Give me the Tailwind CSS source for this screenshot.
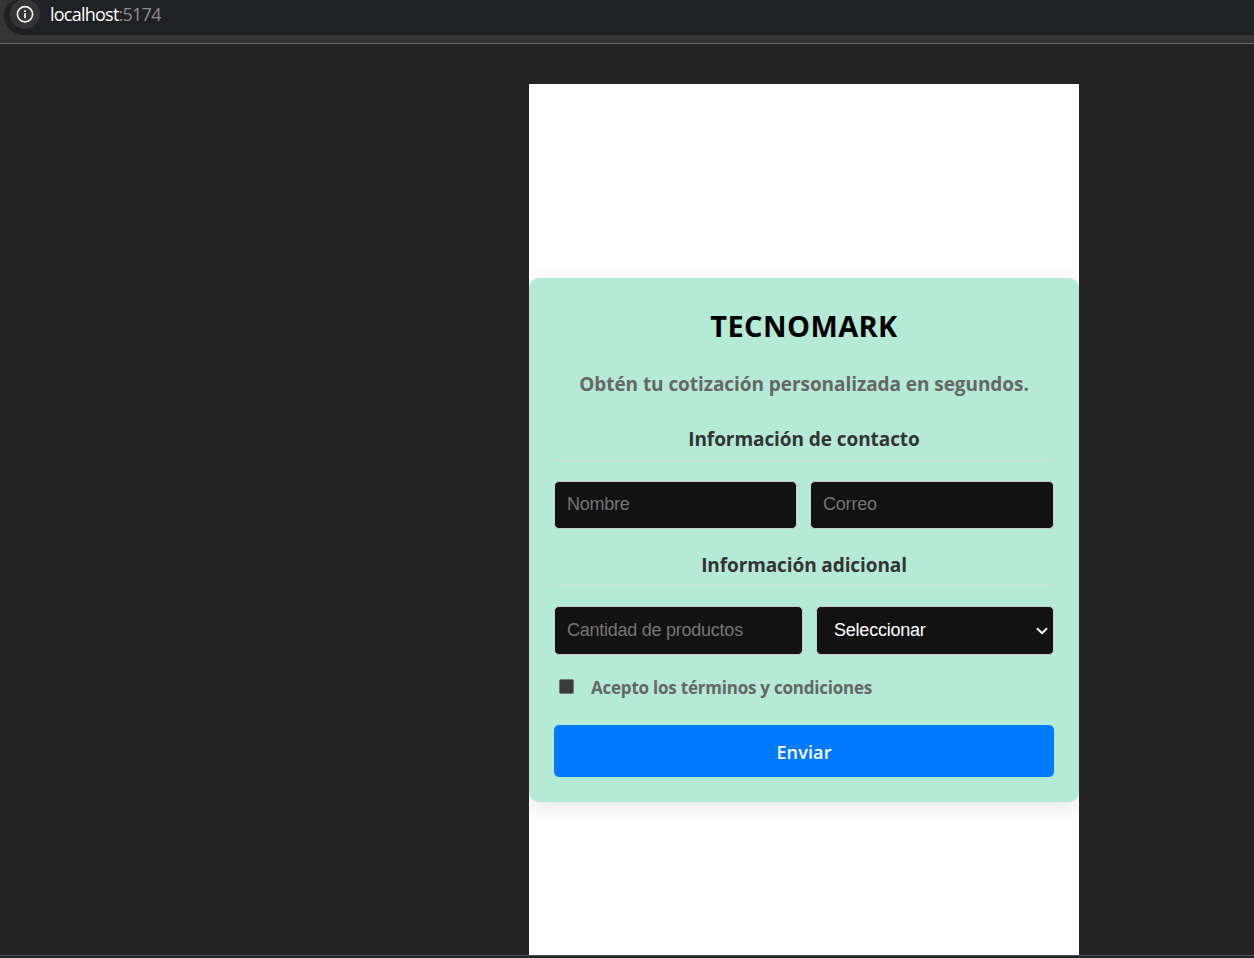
<!DOCTYPE html>
<html lang="es">
<head>
<meta charset="utf-8">
<title>TECNOMARK</title>
<script src="https://cdn.jsdelivr.net/npm/@tailwindcss/browser@4"></script>
</head>
<body class="w-[1254px] h-[958px] overflow-hidden bg-[#242424] flex flex-col font-['Open_Sans',sans-serif]">
  <header class="h-11 shrink-0 bg-[#353535] border-b border-[#656565] pl-1">
    <div class="h-[35px] bg-[#202124] rounded-bl-[20px] rounded-tl-[14px] flex items-start pl-1.5">
      <div class="size-[30px] -mt-px rounded-full bg-[#353535] flex items-center justify-center">
        <svg class="size-[18px]" viewBox="0 0 18 18" fill="none" stroke="#f1f1f1"><circle cx="9" cy="9.2" r="7.6" stroke-width="1.7"/><path d="M9 8.2v5M9 5.2V7" stroke-width="1.8"/></svg>
      </div>
      <p class="ml-[10px] mt-[1px] text-[18px] leading-[27px] tracking-[-0.76px] text-white whitespace-nowrap">localhost<span class="text-[#8d8d8d]">:5174</span></p>
    </div>
  </header>
  <main class="h-[911px] shrink-0 pt-10 pl-[529px]">
    <div class="w-[550px] h-[871px] bg-white pt-[194px] overflow-hidden">
      <form class="h-[524px] rounded-[10px] bg-[#b5ead7] px-[25px] shadow-[0_5px_20px_rgba(0,0,0,0.1)] flex flex-col font-semibold">
        <h1 class="mt-[28px] h-10 leading-10 text-center text-[29px] tracking-[0.4px] font-bold text-black whitespace-nowrap">TECNOMARK</h1>
        <p class="mt-[23px] h-[30px] leading-[30px] text-center text-[19px] tracking-[-0.06px] font-bold text-[#666] whitespace-nowrap">Obtén tu cotización personalizada en segundos.</p>
        <h2 class="mt-[20px] h-[42px] pt-[5px] leading-[30px] border-b border-[#ddd] text-center text-[19px] tracking-[-0.07px] font-bold text-[#333] whitespace-nowrap">Información de contacto</h2>
        <div class="mt-[20px] flex gap-[13px] font-['Liberation_Sans',sans-serif] font-normal text-[18px]">
          <input class="w-[243px] h-12 rounded-[5px] border border-[#ccc] bg-[#121212] px-3 pb-px tracking-[-0.25px] placeholder:text-[#757575]" placeholder="Nombre">
          <input class="w-[244px] h-12 rounded-[5px] border border-[#ccc] bg-[#121212] px-3 pb-px tracking-[-0.2px] placeholder:text-[#757575]" placeholder="Correo">
        </div>
        <h2 class="mt-[20px] h-[37px] leading-[33px] border-b border-[#ddd] text-center text-[19px] tracking-[-0.1px] font-bold text-[#333] whitespace-nowrap">Información adicional</h2>
        <div class="mt-[20px] flex gap-[13px] font-['Liberation_Sans',sans-serif] font-normal text-[18px]">
          <input class="w-[249px] h-[49px] rounded-[5px] border border-[#ccc] bg-[#121212] px-3 pb-px tracking-[-0.25px] placeholder:text-[#757575]" placeholder="Cantidad de productos">
          <div class="w-[238px] h-[49px] rounded-[5px] border border-[#ccc] bg-[#121212] pl-[17px] pr-[5px] pb-px flex items-center justify-between text-white tracking-[-0.22px]">Seleccionar
            <svg class="w-3 h-2 mt-0.5" viewBox="0 0 12 8" fill="none" stroke="#fff" stroke-width="2"><path d="M1 1.2 6 6.2 11 1.2"/></svg>
          </div>
        </div>
        <label class="mt-[18px] h-[30px] flex items-center pl-[5px] text-[17px] tracking-[-0.22px] font-bold text-[#666] whitespace-nowrap"><span class="size-[15px] -mt-[3px] mr-[17px] rounded-[2px] border border-[#767676] bg-[#3b3b3b]"></span>Acepto los términos y condiciones</label>
        <button class="mt-[22px] h-[52px] pt-0.5 rounded-[5px] bg-[#007bff] text-white text-[18px] tracking-[0.15px] font-semibold">Enviar</button>
      </form>
    </div>
  </main>
  <footer class="h-[3px] bg-[#1c2929] border-t border-[#485052]"></footer>
</body>
</html>
